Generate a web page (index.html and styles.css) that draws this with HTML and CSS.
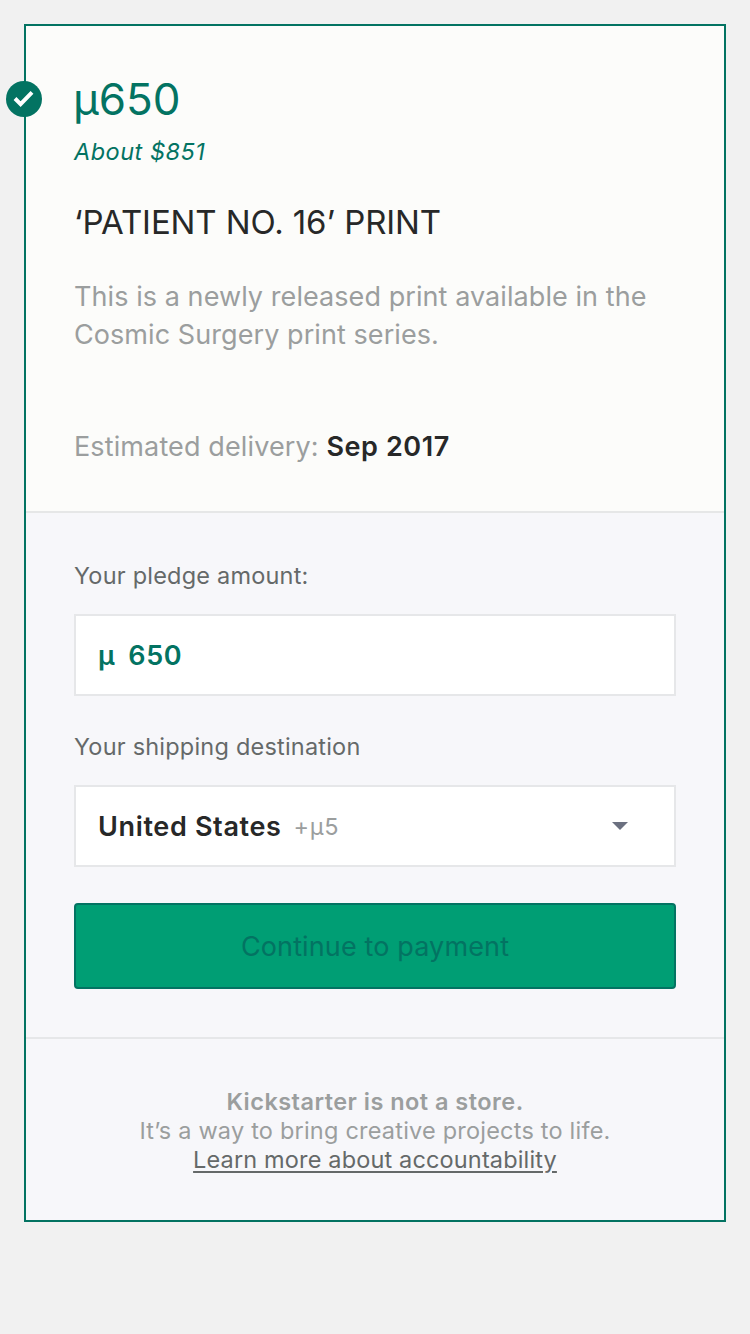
FILE: index.html
```html
<!DOCTYPE html>
<html lang="en">
<head>
<meta charset="utf-8">
<title>Pledge</title>
<link rel="stylesheet" href="styles.css">
</head>
<body>
<main class="card">
  <svg class="badge" viewBox="0 0 36 36" aria-hidden="true">
    <circle cx="18" cy="18" r="18"/>
    <path d="M9 17.5 14.6 23.1 26 11.4"/>
  </svg>
  <section class="reward">
    <h1 class="amount">µ650</h1>
    <p class="about">About $851</p>
    <h2 class="title">‘PATIENT NO. 16’ PRINT</h2>
    <p class="description">This is a newly released print available in the<br>Cosmic Surgery print series.</p>
    <p class="delivery">Estimated delivery: <strong class="date">Sep 2017</strong></p>
  </section>
  <section class="form">
    <p class="label">Your pledge amount:</p>
    <div class="field pledge"><span class="currency">µ</span><span class="value">650</span></div>
    <p class="label label-shipping">Your shipping destination</p>
    <div class="field"><span class="country">United States</span><span class="cost">+µ5</span>
      <svg class="arrow" viewBox="0 0 16 8" aria-hidden="true"><path d="M0 0H16L8 8Z"/></svg>
    </div>
    <button class="continue">Continue to payment</button>
  </section>
  <footer class="note">
    <strong class="note-title">Kickstarter is not a store.</strong>
    <span class="note-text">It’s a way to bring creative projects to life.</span>
    <a class="note-link" href="#">Learn more about accountability</a>
  </footer>
</main>
</body>
</html>
```

FILE: styles.css
```css
* { box-sizing: border-box; }
body { margin: 0; padding: 24px; background: #f1f1f1; font-family: Inter, "Liberation Sans", sans-serif; color: #272828; }
h1, h2, p { margin: 0; font-weight: 400; }
.card { position: relative; height: 1198px; border: 2px solid #037362; background: #f7f7fa; }
.badge { position: absolute; left: -20px; top: 55px; width: 36px; height: 36px; fill: #037362; }
.badge path { fill: none; stroke: #fff; stroke-width: 4; }
.reward { height: 487px; padding: 47px 48px 0; background: #fcfcfa; border-bottom: 2px solid #e6e7e7; }
.amount { margin-left: -1px; font-size: 44px; line-height: 52px; color: #037362; }
.about { margin-top: 12px; font-size: 23.5px; line-height: 30px; font-style: italic; color: #037362; letter-spacing: .5px; }
.title { margin-top: 34px; font-size: 33px; line-height: 42px; letter-spacing: -.1px; }
.description, .delivery { font-size: 27px; line-height: 38px; color: #9b9e9e; white-space: nowrap; letter-spacing: .07px; }
.description { margin-top: 35px; }
.delivery { margin-top: 74px; letter-spacing: .12px; }
.date { font-weight: 600; color: #272828; letter-spacing: .6px; }
.form { height: 526px; padding: 48px 48px 0; border-bottom: 2px solid #e6e7e9; }
.label { font-size: 23.5px; line-height: 30px; color: #656969; letter-spacing: .21px; }
.label-shipping { margin-top: 36px; }
.field { display: flex; align-items: center; height: 82px; margin-top: 23px; padding: 0 46px 0 22px; border: 2px solid #e6e7e9; background: #fff; font-size: 27px; font-weight: 600; letter-spacing: .65px; }
.pledge { color: #037362; }
.value { margin-left: 13px; }
.cost { margin-left: 12px; font-size: 23.5px; font-weight: 400; color: #9b9e9e; }
.arrow { width: 16px; height: 8px; margin-left: auto; fill: #6b7080; }
.continue { display: block; width: 100%; height: 86px; margin-top: 36px; padding: 1px 0 0; border: 2px solid #037362; border-radius: 4px; background: #009e74; color: #037362; font: 400 27px Inter, sans-serif; letter-spacing: .13px; }
.note { display: flex; flex-direction: column; align-items: center; padding-top: 48px; font-size: 23.5px; line-height: 29px; color: #9b9e9e; white-space: nowrap; letter-spacing: .21px; }
.note-title { font-weight: 600; letter-spacing: .47px; }
.note-link { color: #656969; text-decoration-thickness: 2px; text-underline-offset: 3px; letter-spacing: .15px; }
```
